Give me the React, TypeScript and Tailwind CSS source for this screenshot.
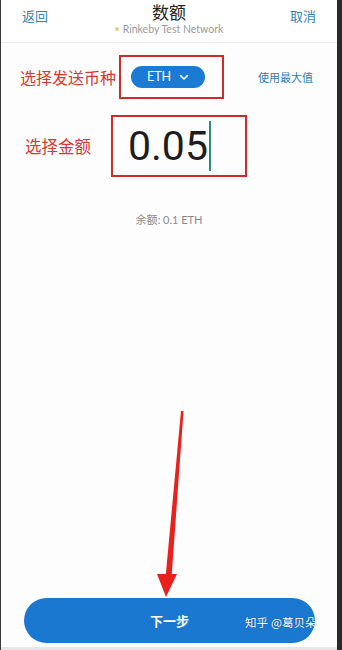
import React from "react";

const cjk = { fontFamily: '"Noto Sans CJK SC", "Noto Sans", sans-serif' };
const latin = { fontFamily: 'Lato, "Noto Sans CJK SC", sans-serif' };

export default function App() {
  return (
    <div className="relative flex h-[650px] w-[342px] overflow-hidden bg-[#2a2a2a]" style={cjk}>
      <div className="w-px bg-[#3a3a3a]" />
      <div className="flex flex-1 flex-col bg-[#fdfdfe]">
        {/* header */}
        <div className="relative flex h-[43px] items-start justify-between border-b border-[#ececec] bg-white px-[21px]">
          <span className="mt-[6px] text-[13px] text-[#3785b3]">返回</span>
          <div className="flex flex-col items-center pt-[1px]">
            <span className="text-[17px] leading-[22px] text-[#222]">数额</span>
            <div className="flex items-center gap-[4px]">
              <span className="h-[4px] w-[4px] rounded-full bg-[#e3cd7c]" />
              <span className="text-[10.5px] leading-[12px] text-[#9a9a9a]" style={latin}>Rinkeby Test Network</span>
            </div>
          </div>
          <span className="mt-[6px] text-[13px] text-[#3785b3]">取消</span>
        </div>

        {/* currency row */}
        <div className="mt-[12px] flex h-[44px] items-center pl-[19px]">
          <span className="w-[99px] text-[16px] text-[#d8372f]">选择发送币种</span>
          <div className="flex h-[44px] w-[105px] items-center border-2 border-[#cf2b2b] pl-[10px]">
            <div className="flex h-[22px] w-[74px] items-center justify-center gap-[8px] rounded-full bg-[#1b7bd4]">
              <span className="text-[12.5px] text-white" style={latin}>ETH</span>
              <svg width="10" height="7" viewBox="0 0 10 7" fill="none">
                <path d="M1.5 1.5 L5 5 L8.5 1.5" stroke="white" strokeWidth="1.6" strokeLinecap="round" strokeLinejoin="round" />
              </svg>
            </div>
          </div>
          <span className="ml-[34px] text-[11px] text-[#2f7db4]">使用最大值</span>
        </div>

        {/* amount row */}
        <div className="mt-[16px] flex h-[62px] items-center pl-[24px]">
          <span className="w-[86px] text-[16.5px] text-[#d8372f]">选择金额</span>
          <div className="flex h-[62px] w-[136px] items-center border-2 border-[#cf2b2b] pl-[15px]">
            <span className="text-[41px] leading-none text-[#1e1e1e]" style={{ fontFamily: 'Roboto, sans-serif' }}>0.05</span>
            <span className="ml-[1px] h-[50px] w-[2px] bg-[#2b8a7a]" />
          </div>
        </div>

        {/* balance */}
        <div className="mt-[34px] text-center text-[11px] text-[#8a8a8a]">
          余额: <span style={latin}>0.1 ETH</span>
        </div>

        <div className="flex-1" />

        {/* button */}
        <div className="ml-[23px] mr-[22px] flex h-[45px] items-center justify-center rounded-full bg-[#1b78d0]">
          <span className="text-[13px] font-bold text-white">下一步</span>
        </div>
        <div className="h-[4px]" />
        <div className="h-[3px] bg-[#e6e6e6]" />
      </div>
      <div className="w-[5px] bg-[#2a2a2a]" />

      {/* annotation arrow */}
      <svg className="pointer-events-none absolute left-0 top-0" width="342" height="650" viewBox="0 0 342 650">
        <polygon points="181,411 183.5,411 171.5,578 165.5,578" fill="#e8211c" />
        <polygon points="157,574 177,574 166,597" fill="#e8211c" />
      </svg>

      {/* watermark */}
      <div className="pointer-events-none absolute left-[245px] top-[614px] flex items-center gap-[3px] text-[11.5px] text-white" style={{ textShadow: "0 0 1px rgba(0,0,0,0.5)" }}>
        <span>知乎</span>
        <span>@葛贝朵</span>
      </div>
    </div>
  );
}
